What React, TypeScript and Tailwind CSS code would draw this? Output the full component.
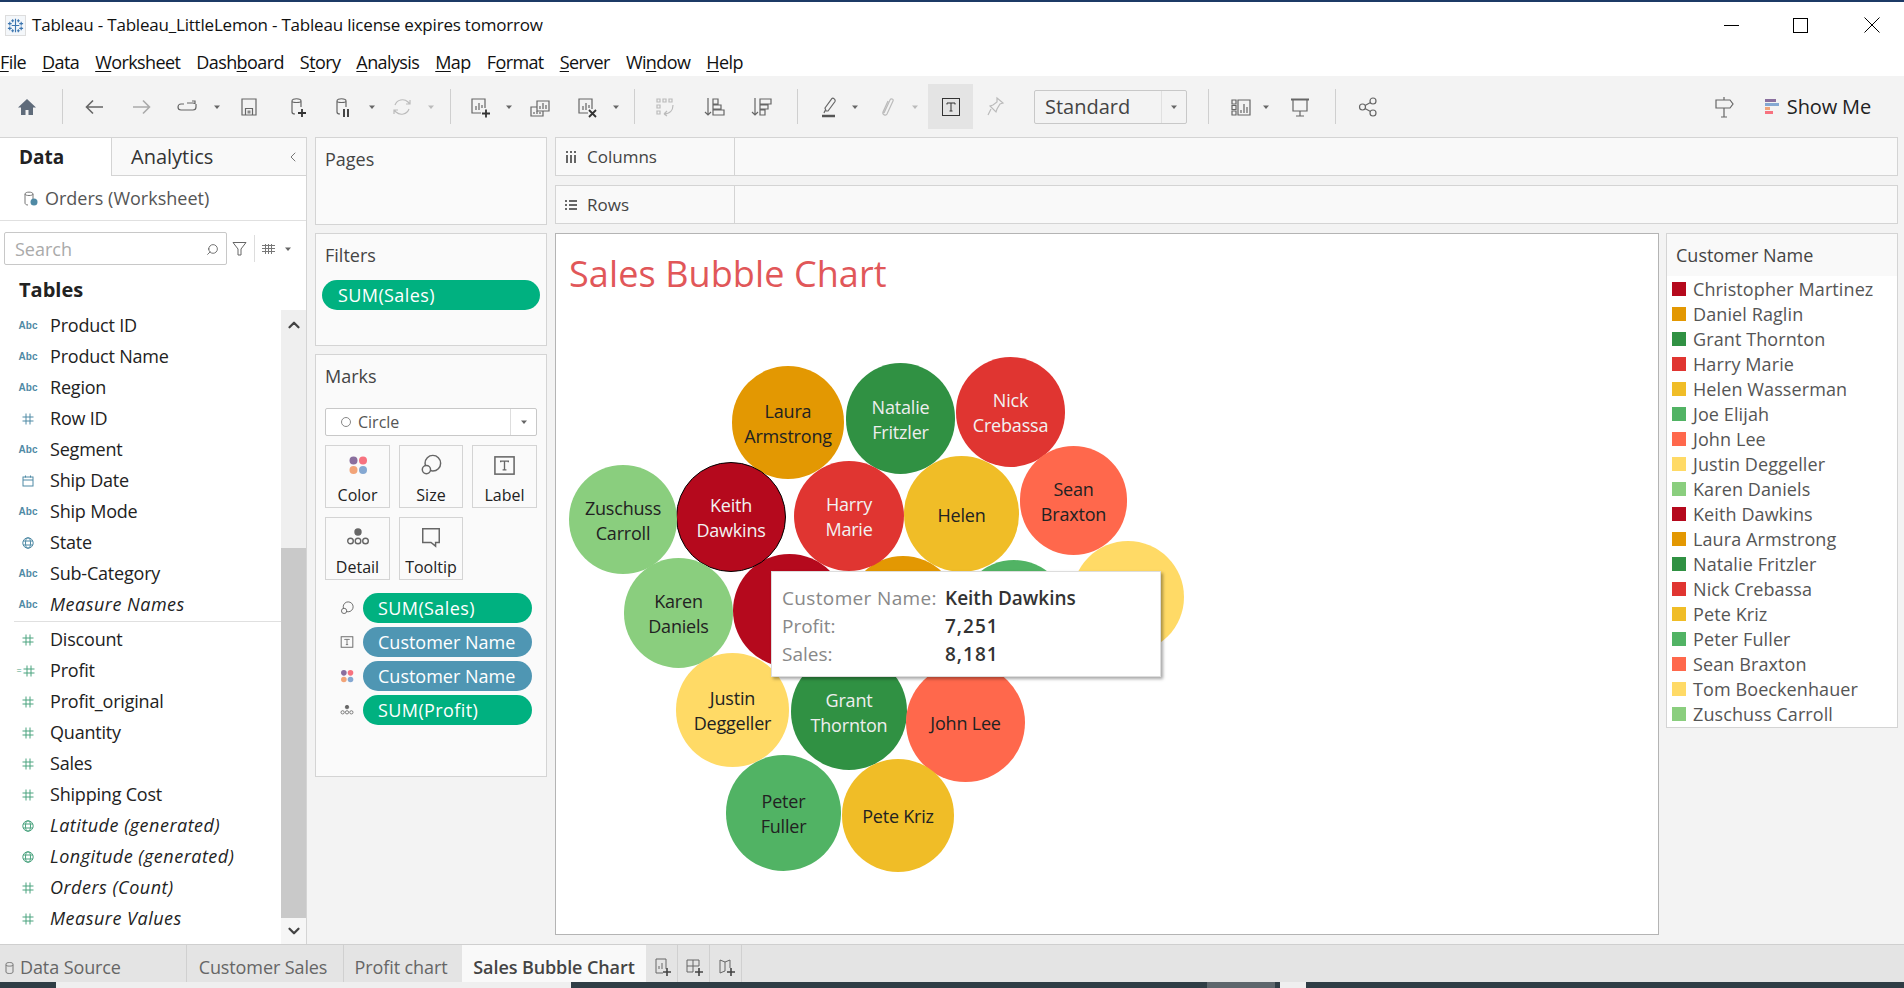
import { ReactNode } from "react";
import { ChevronDown, ChevronLeft, ChevronUp, Search } from "lucide-react";

const Ico = ({ children, cls = "ml-0" }: { children: ReactNode; cls?: string }) => (
  <svg className={`${cls} w-6 h-6 shrink-0`} viewBox="0 0 24 24" fill="none" stroke="#666" strokeWidth="1.2">
    {children}
  </svg>
);

const Caret = ({ cls, light }: { cls: string; light?: boolean }) => (
  <svg className={`${cls} w-2 h-2 shrink-0`} viewBox="0 0 8 8">
    <path d="M1 2.5h6L4 6z" fill={light ? "#bbb" : "#666"} />
  </svg>
);

const Sep = ({ cls }: { cls: string }) => <div className={`${cls} w-px h-[35px] bg-[#cfcfcf] shrink-0`} />;

const Cyl = () => <path d="M6 6c0-3 9-3 9 0v6M6 6c0 2 9 2 9 0M6 6v11c0 1 1 2 3 2" />;

const ColorDots = ({ size }: { size: string }) => (
  <svg className={size} viewBox="0 0 20 20">
    <circle cx="5.5" cy="5.5" r="4" fill="#8a6f9e" />
    <circle cx="15" cy="5.5" r="4" fill="#f7727f" />
    <circle cx="5.5" cy="15" r="4" fill="#f2a478" />
    <circle cx="15" cy="15" r="4" fill="#85a8d2" />
  </svg>
);
const SizeIcon = ({ size }: { size: string }) => (
  <svg className={size} viewBox="0 0 24 24" fill="none" stroke="#666" strokeWidth="1.6">
    <circle cx="14" cy="10" r="8.5" />
    <circle cx="7" cy="17" r="4.5" fill="#fafafa" />
  </svg>
);
const LabelIcon = ({ size }: { size: string }) => (
  <svg className={size} viewBox="0 0 24 24" fill="none" stroke="#666" strokeWidth="1.6">
    <rect x="2" y="3" width="20" height="18" />
    <path d="M8 8.5v-1h8v1M12 7.5v9M10 16.5h4" strokeWidth="1.4" />
  </svg>
);
const DetailIcon = ({ size }: { size: string }) => (
  <svg className={size} viewBox="0 0 24 24" fill="none" stroke="#666" strokeWidth="1.4">
    <circle cx="12" cy="7" r="3" fill="#666" />
    <circle cx="4.5" cy="16" r="2.8" />
    <circle cx="12" cy="16" r="2.8" />
    <circle cx="19.5" cy="16" r="2.8" />
  </svg>
);
const TooltipIcon = ({ size }: { size: string }) => (
  <svg className={size} viewBox="0 0 24 24" fill="none" stroke="#666" strokeWidth="1.6">
    <path d="M3 3h18v15h-4v4l-5-4H3z" />
  </svg>
);

const HashIcon = ({ color }: { color: string }) => (
  <svg className="w-3 h-3" viewBox="0 0 12 12" fill="none" stroke={color} strokeWidth="1">
    <path d="M4 .5v11M8 .5v11M.5 4h11M.5 8h11" />
  </svg>
);
const GlobeIcon = ({ color }: { color: string }) => (
  <svg className="w-3 h-3" viewBox="0 0 12 12" fill="none" stroke={color} strokeWidth="1">
    <circle cx="6" cy="6" r="5.2" />
    <ellipse cx="6" cy="6" rx="2.5" ry="5.2" />
    <path d="M1 4h10M1 8h10" />
  </svg>
);
const DateIcon = ({ color }: { color: string }) => (
  <svg className="w-3 h-3" viewBox="0 0 12 12" fill="none" stroke={color} strokeWidth="1">
    <rect x="1" y="2" width="10" height="9" />
    <path d="M1 5h10M3.5 .5v2M8.5 .5v2" />
  </svg>
);

const BLUE = "#4f8aa5";
const GREEN = "#4ba37f";

type Field = { name: string; kind: "abc" | "hash" | "calc" | "globe" | "date"; color: string; italic?: boolean };

const dimensions: Field[] = [
  { name: "Product ID", kind: "abc", color: BLUE },
  { name: "Product Name", kind: "abc", color: BLUE },
  { name: "Region", kind: "abc", color: BLUE },
  { name: "Row ID", kind: "hash", color: BLUE },
  { name: "Segment", kind: "abc", color: BLUE },
  { name: "Ship Date", kind: "date", color: BLUE },
  { name: "Ship Mode", kind: "abc", color: BLUE },
  { name: "State", kind: "globe", color: BLUE },
  { name: "Sub-Category", kind: "abc", color: BLUE },
  { name: "Measure Names", kind: "abc", color: BLUE, italic: true },
];

const measures: Field[] = [
  { name: "Discount", kind: "hash", color: GREEN },
  { name: "Profit", kind: "calc", color: GREEN },
  { name: "Profit_original", kind: "hash", color: GREEN },
  { name: "Quantity", kind: "hash", color: GREEN },
  { name: "Sales", kind: "hash", color: GREEN },
  { name: "Shipping Cost", kind: "hash", color: GREEN },
  { name: "Latitude (generated)", kind: "globe", color: GREEN, italic: true },
  { name: "Longitude (generated)", kind: "globe", color: GREEN, italic: true },
  { name: "Orders (Count)", kind: "hash", color: GREEN, italic: true },
  { name: "Measure Values", kind: "hash", color: GREEN, italic: true },
];

const FieldRow = ({ f }: { f: Field }) => (
  <div className="h-[31px] flex items-center">
    <div className="w-[50px] pl-[15px] pr-[9px] flex justify-center items-center gap-[1px] shrink-0">
      {f.kind === "abc" && <span className="text-[10px] font-semibold font-['Liberation_Sans',sans-serif]" style={{ color: f.color }}>Abc</span>}
      {f.kind === "hash" && <HashIcon color={f.color} />}
      {f.kind === "calc" && (
        <>
          <span className="text-[9px] leading-none text-[#4ba37f] -ml-[5px]">=</span>
          <HashIcon color={f.color} />
        </>
      )}
      {f.kind === "globe" && <GlobeIcon color={f.color} />}
      {f.kind === "date" && <DateIcon color={f.color} />}
    </div>
    <span className={`text-[18px] text-[#222] ${f.italic ? "italic tracking-[0.5px]" : "tracking-[-0.2px]"}`}>{f.name}</span>
  </div>
);

const menus: [string, string, string][] = [
  ["", "F", "ile"],
  ["", "D", "ata"],
  ["", "W", "orksheet"],
  ["Dash", "b", "oard"],
  ["S", "t", "ory"],
  ["", "A", "nalysis"],
  ["", "M", "ap"],
  ["F", "o", "rmat"],
  ["", "S", "erver"],
  ["Wi", "n", "dow"],
  ["", "H", "elp"],
];

const legend: [string, string][] = [
  ["Christopher Martinez", "bg-[#b5091d]"],
  ["Daniel Raglin", "bg-[#e39802]"],
  ["Grant Thornton", "bg-[#309143]"],
  ["Harry Marie", "bg-[#e03531]"],
  ["Helen Wasserman", "bg-[#f0bd27]"],
  ["Joe Elijah", "bg-[#51b364]"],
  ["John Lee", "bg-[#ff684c]"],
  ["Justin Deggeller", "bg-[#ffda66]"],
  ["Karen Daniels", "bg-[#8ace7e]"],
  ["Keith Dawkins", "bg-[#b5091d]"],
  ["Laura Armstrong", "bg-[#e39802]"],
  ["Natalie Fritzler", "bg-[#309143]"],
  ["Nick Crebassa", "bg-[#e03531]"],
  ["Pete Kriz", "bg-[#f0bd27]"],
  ["Peter Fuller", "bg-[#51b364]"],
  ["Sean Braxton", "bg-[#ff684c]"],
  ["Tom Boeckenhauer", "bg-[#ffda66]"],
  ["Zuschuss Carroll", "bg-[#8ace7e]"],
];

// place and colour of each mark on the chart canvas
const bubbles: { lines: string[]; cls: string }[] = [
  { lines: [], cls: "left-[177px] top-[320px] w-[113px] h-[113px] bg-[#b5091d]" },
  { lines: [], cls: "left-[291px] top-[322px] w-[112px] h-[112px] bg-[#e39802]" },
  { lines: [], cls: "left-[403px] top-[326px] w-[110px] h-[110px] bg-[#51b364]" },
  { lines: [], cls: "left-[516px] top-[307px] w-[112px] h-[112px] bg-[#ffda66]" },
  { lines: ["Laura", "Armstrong"], cls: "left-[176px] top-[132px] w-[112px] h-[113px] bg-[#e39802] text-[#222]" },
  { lines: ["Natalie", "Fritzler"], cls: "left-[290px] top-[129px] w-[109px] h-[111px] bg-[#309143] text-[#eee]" },
  { lines: ["Nick", "Crebassa"], cls: "left-[400px] top-[123px] w-[109px] h-[110px] bg-[#e03531] text-[#f2f2f2]" },
  { lines: ["Sean", "Braxton"], cls: "left-[464px] top-[212px] w-[107px] h-[109px] bg-[#ff684c] text-[#222]" },
  { lines: ["Harry", "Marie"], cls: "left-[238px] top-[227px] w-[110px] h-[110px] bg-[#e03531] text-[#f2f2f2]" },
  { lines: ["Helen"], cls: "left-[348px] top-[222px] w-[115px] h-[116px] bg-[#f0bd27] text-[#222]" },
  { lines: ["Keith", "Dawkins"], cls: "left-[120px] top-[228px] w-[110px] h-[110px] bg-[#b5091d] text-[#f2f2f2] border border-black" },
  { lines: ["Zuschuss", "Carroll"], cls: "left-[13px] top-[231px] w-[108px] h-[109px] bg-[#8ace7e] text-[#222]" },
  { lines: ["Karen", "Daniels"], cls: "left-[68px] top-[324px] w-[109px] h-[110px] bg-[#8ace7e] text-[#222]" },
  { lines: ["Justin", "Deggeller"], cls: "left-[120px] top-[419px] w-[113px] h-[114px] bg-[#ffda66] text-[#222]" },
  { lines: ["Grant", "Thornton"], cls: "left-[235px] top-[419px] w-[116px] h-[117px] bg-[#309143] text-[#eee]" },
  { lines: ["John Lee"], cls: "left-[350px] top-[429px] w-[119px] h-[119px] bg-[#ff684c] text-[#222]" },
  { lines: ["Peter", "Fuller"], cls: "left-[170px] top-[521px] w-[115px] h-[116px] bg-[#51b364] text-[#222]" },
  { lines: ["Pete Kriz"], cls: "left-[286px] top-[525px] w-[112px] h-[113px] bg-[#f0bd27] text-[#222]" },
];

const MarkBtn = ({ icon, label, cls }: { icon: ReactNode; label: string; cls: string }) => (
  <div className={`${cls} h-[63px] border border-[#d4d4d4] flex flex-col items-center pt-[7px] text-[16px] text-[#222]`}>
    <div className="h-[24px] flex items-center">{icon}</div>
    <span className="mt-[6px] leading-[24px]">{label}</span>
  </div>
);

const MarkPill = ({ icon, label, cls }: { icon: ReactNode; label: string; cls: string }) => (
  <div className="flex items-center h-[30px]">
    <div className="w-[47px] pl-[24px] shrink-0 flex">{icon}</div>
    <div className={`${cls} w-[169px] h-[30px] rounded-full pl-[15px] text-[18px] leading-[30px] text-white`}>{label}</div>
  </div>
);

const ShelfRow = ({ icon, label }: { icon: ReactNode; label: string }) => (
  <div className="h-[39px] border border-[#d4d4d4] bg-[#f9f9f9] flex items-center">
    <div className="w-[179px] h-full border-r border-[#d4d4d4] flex items-center pl-[9px]">
      {icon}
      <span className="ml-[10px] text-[17px] text-[#444]">{label}</span>
    </div>
  </div>
);

export default function App() {
  return (
    <div className="w-[1904px] h-[988px] flex flex-col overflow-hidden bg-white font-['Open_Sans',sans-serif] text-[#222]">
      <div className="h-[2px] bg-[#1c3a66]" />

      {/* title bar */}
      <div className="h-[46px] flex items-center">
        <svg className="ml-[5px] w-[21px] h-[21px] border border-[#ddd] bg-[#f4f7fa]" viewBox="0 0 20 20" stroke="#3d76b0" strokeWidth="1.2">
          <path d="M10 3v14M6 10h8M4 6v4M2 8h4M16 6v4M14 8h4M4 11v4M2 13h4M16 11v4M14 13h4M7 3.5v3M5.5 5h3M13 3.5v3M11.5 5h3M7 14v3M5.5 15.500h3M13 14v3M11.500 15.500h3" />
        </svg>
        <span className="ml-[6px] text-[17px] tracking-[-0.2px] text-[#111]">Tableau - Tableau_LittleLemon - Tableau license expires tomorrow</span>
        <div className="ml-auto flex items-center">
          <div className="w-[15px] h-px bg-black mr-[54px]" />
          <div className="w-[15px] h-[15px] border border-black mr-[56px]" />
          <svg className="w-[16px] h-[16px] mr-[24px]" viewBox="0 0 16 16" stroke="black">
            <path d="M.5.5l15 15M15.500.5l-15 15" />
          </svg>
        </div>
      </div>

      {/* menu */}
      <div className="h-[28px] flex items-center gap-[16px] text-[18px] tracking-[-0.6px] text-[#111]">
        {menus.map(([pre, key, post]) => (
          <span key={pre + key + post}>
            {pre}
            <span className="underline underline-offset-2">{key}</span>
            {post}
          </span>
        ))}
      </div>

      {/* toolbar */}
      <div className="h-[61px] bg-[#f3f3f3] flex items-center">
        <Ico cls="ml-[15px]"><path d="M12 4L3 12.500h3V20h4.500v-5h3v5H18v-7.500h3z" fill="#5f6b7a" stroke="none" /></Ico>
        <Sep cls="ml-[23px]" />
        <Ico cls="ml-[19px]"><path d="M21 12H5M11 5.500L4.500 12l6.500 6.500" strokeWidth="1.6" /></Ico>
        <Ico cls="ml-[24px]"><path d="M3 12h16M13 5.500l6.500 6.500-6.500 6.500" stroke="#aaa" strokeWidth="1.6" /></Ico>
        <Ico cls="ml-[21px]"><path d="M9 9H6a3 3 0 0 0 0 6h12a3 3 0 0 0 3-3V9M21 9l0 1M17 6h3v3M20 9c0-1-1-1-2-1h-6" /></Ico>
        <Caret cls="ml-[14px]" />
        <Ico cls="ml-[16px]"><path d="M5 4h14v16H5z" /><path d="M8.500 20v-6.500h7V20" /><rect x="10.500" y="15.500" width="3" height="3" fill="#888" stroke="none" /></Ico>
        <Ico cls="ml-[25px]"><Cyl /><path d="M12 18h8M16 14v8" stroke="#333" strokeWidth="1.8" /></Ico>
        <Ico cls="ml-[21px]"><Cyl /><path d="M13 14v8M17 14v8" stroke="#333" strokeWidth="1.8" /></Ico>
        <Caret cls="ml-[13px]" />
        <Ico cls="ml-[14px]"><path d="M5 10a8 8 0 0 1 13-3l2 2M19 14a8 8 0 0 1-13 3l-2-2M20 5v4h-4M4 19v-4h4" stroke="#bbb" /></Ico>
        <Caret cls="ml-[13px]" light />
        <Sep cls="ml-[15px]" />
        <Ico cls="ml-[17px]"><path d="M17 13V4H4v14h9" /><path d="M8 15v-4M11 15V8M14 13v-3" /><path d="M14 18.500h8M18 14.500v8" stroke="#333" strokeWidth="1.8" /></Ico>
        <Caret cls="ml-[13px]" />
        <Ico cls="ml-[15px]"><path d="M9 6h12v10H9z" /><path d="M12 14v-3M15 14V8M18 14v-4" /><path d="M9 12H3v9h12v-5M6 19v-2M9 19v-3M12 19v-2" /></Ico>
        <Ico cls="ml-[23px]"><path d="M17 14V4H4v14h9" /><path d="M8 15v-4M11 15V8M14 13v-3" /><path d="M14 15l7 7M21 15l-7 7" stroke="#333" strokeWidth="1.8" /></Ico>
        <Caret cls="ml-[13px]" />
        <Sep cls="ml-[14px]" />
        <Ico cls="ml-[18px]"><g stroke="#bbb"><path d="M4 4h3v3H4zM10 4h3v3h-3zM16 4h3v3h-3zM4 10h3v3H4zM4 16h3v3H4z" /><path d="M20 10c0 5-3 9-9 9M11 19l3-3M11 19l3 2" /></g></Ico>
        <Ico cls="ml-[26px]"><path d="M5 3v17M2 17l3 3 3-3" /><path d="M10 4h5v5h-5zM10 10h8v4h-8zM10 15h11v5H10z" /></Ico>
        <Ico cls="ml-[23px]"><path d="M5 3v17M2 17l3 3 3-3" /><path d="M10 4h11v5H10zM10 10h8v4h-8zM10 15h5v5h-5z" /></Ico>
        <Sep cls="ml-[23px]" />
        <Ico cls="ml-[19px]"><path d="M9 16l-1-3L15 3.500c1-1 4 1 3 3L11 16zM8 15.500L7 18" /><path d="M5 21h13" stroke="#555" strokeWidth="2.500" /></Ico>
        <Caret cls="ml-[10px]" />
        <Ico cls="ml-[16px]"><path d="M9 18L15 5c1-2 4-1 3 1l-6 13c-1 2-5 1-4-2l5-11" stroke="#bbb" /></Ico>
        <Caret cls="ml-[12px]" light />
        <div className="ml-[9px] w-[45px] h-[45px] bg-[#e4e4e4] flex items-center justify-center">
          <svg className="w-[18px] h-[18px]" viewBox="0 0 18 18" fill="none" stroke="#333">
            <rect x=".5" y=".5" width="17" height="17" />
            <path d="M5 6.500V5h8v1.500M9 5v8M7.500 13h3" />
          </svg>
        </div>
        <Ico cls="ml-[10px]"><path d="M14 3l6 5-3 1-3 5-1 3-6-6 3-1 4-3zM8 14l-3 6" stroke="#bbb" /></Ico>
        <div className="ml-[27px] w-[153px] h-[34px] border border-[#c8c8c8] rounded-[2px] flex items-center">
          <span className="w-[126px] pl-[10px] text-[20px] text-[#444] leading-[32px]">Standard</span>
          <div className="flex-1 h-full border-l border-[#e0e0e0] flex items-center justify-center">
            <Caret cls="ml-0" />
          </div>
        </div>
        <Sep cls="ml-[21px]" />
        <Ico cls="ml-[20px]"><path d="M3 5h4v4H3zM3 10.500h4v4H3zM3 16h4v4H3zM9 5h12v15H9z" /><path d="M12 18v-3M15 18V9M18 18v-6" /></Ico>
        <Caret cls="ml-[9px]" />
        <Ico cls="ml-[18px]"><path d="M3 4.500h18" strokeWidth="2" /><path d="M5 5v11h14V5M12 16v5M8 21h8" /></Ico>
        <Sep cls="ml-[23px]" />
        <Ico cls="ml-[20px]"><circle cx="6.500" cy="12" r="3" /><circle cx="17" cy="6" r="3" /><circle cx="17" cy="18" r="3" /><path d="M9 10.500l5.500-3M9 13.500l5.500 3" /></Ico>
        <Ico cls="ml-auto"><path d="M12 2v3M4 5h14l3 4-3 4H4zM12 13v9M9 22h6" /></Ico>
        <div className="ml-[29px] mr-[33px] flex items-center">
          <div className="w-[14px] flex flex-col gap-[1px]">
            <div className="h-[3px] w-[11px] bg-[#8a6f9e]" />
            <div className="h-[3px] w-[14px] bg-[#85a8d2]" />
            <div className="h-[3px] w-[5px] bg-[#f2a478]" />
            <div className="h-[3px] w-[8px] bg-[#f7727f]" />
          </div>
          <span className="ml-[8px] text-[20px] tracking-[-0.15px] text-[#222]">Show Me</span>
        </div>
      </div>

      {/* main area */}
      <div className="flex-1 min-h-0 bg-[#f3f3f3] flex">
        {/* data pane */}
        <div className="w-[307px] shrink-0 bg-white border-t border-r border-[#d4d4d4] flex flex-col">
          <div className="h-[38px] flex shrink-0">
            <div className="w-[111px] pl-[19px] text-[19px] font-bold leading-[38px] text-[#222]">Data</div>
            <div className="flex-1 bg-[#f9f9f9] border-l border-b border-[#d4d4d4] pl-[19px] text-[20px] leading-[37px] flex items-center text-[#333]">
              Analytics
              <ChevronLeft className="ml-auto mr-[5px] w-4 h-4 text-[#777]" strokeWidth={1.5} />
            </div>
          </div>
          <div className="h-[45px] shrink-0 border-b border-[#e0e0e0] flex items-center pl-[23px] text-[#555] text-[18px]">
            <svg className="w-[15px] h-[15px]" viewBox="0 0 15 15" fill="none" stroke="#777">
              <path d="M2 3c0-2.500 8-2.500 8 0v5M2 3c0 2 8 2 8 0M2 3v9c0 1 1 2 3 2" />
              <circle cx="11" cy="11" r="3.500" fill="#4f8aa5" stroke="none" />
            </svg>
            <span className="ml-[7px]">Orders (Worksheet)</span>
          </div>
          <div className="mt-[11px] ml-[4px] flex items-center shrink-0">
            <div className="w-[223px] h-[33px] border border-[#c8c8c8] rounded-[2px] flex items-center pl-[10px] pt-[1px] text-[18px] text-[#aaa]">
              Search
              <Search className="ml-auto mr-[7px] w-[13px] h-[13px] text-[#555] -scale-x-100" strokeWidth={1.5} />
            </div>
            <svg className="ml-[5px] w-[15px] h-[15px]" viewBox="0 0 15 15" fill="none" stroke="#666">
              <path d="M1 1.500h13L9 8v6H6V8z" />
            </svg>
            <div className="ml-[7px] w-px h-[27px] bg-[#ddd]" />
            <svg className="ml-[7px] w-[13px] h-[10px]" viewBox="0 0 13 10" stroke="#777">
              <path d="M0 1.500h13M0 4.500h13M0 7.500h13M3.500 0v10M6.500 0v10M9.500 0v10" />
            </svg>
            <Caret cls="ml-[9px]" />
          </div>
          <div className="h-[45px] shrink-0 pl-[19px] pt-[5px] flex items-center text-[20px] font-bold text-[#222]">Tables</div>
          <div className="flex-1 min-h-0 flex">
            <div className="flex-1">
              {dimensions.map((f) => <FieldRow key={f.name} f={f} />)}
              <div className="ml-[14px] mt-[1px] mb-[2px] h-px bg-[#e0e0e0]" />
              {measures.map((f) => <FieldRow key={f.name} f={f} />)}
            </div>
            <div className="w-[25px] flex flex-col bg-[#efefef]">
              <div className="h-[238px] pt-[6px] flex justify-center">
                <ChevronUp className="w-[18px] h-[18px] text-[#444]" strokeWidth={3} />
              </div>
              <div className="h-[370px] bg-[#c9c9c9]" />
              <div className="flex-1 bg-[#f6f6f6] flex items-center justify-center">
                <ChevronDown className="w-[18px] h-[18px] text-[#444]" strokeWidth={3} />
              </div>
            </div>
          </div>
        </div>

        {/* cards */}
        <div className="ml-[8px] w-[232px] shrink-0 flex flex-col gap-[8px] text-[18px] text-[#444]">
          <div className="h-[88px] border border-[#d4d4d4] bg-[#fafafa] pl-[9px] pt-[8px]">Pages</div>
          <div className="h-[113px] border border-[#d4d4d4] bg-[#fafafa] pt-[8px]">
            <div className="pl-[9px]">Filters</div>
            <div className="mt-[11px] ml-[6px] w-[218px] h-[30px] rounded-full bg-[#00b180] pl-[16px] tracking-[0.4px] leading-[30px] text-white">SUM(Sales)</div>
          </div>
          <div className="h-[423px] border border-[#d4d4d4] bg-[#fafafa] pt-[8px]">
            <div className="pl-[9px]">Marks</div>
            <div className="mt-[18px] ml-[9px] w-[212px] h-[28px] border border-[#c8c8c8] rounded-[2px] bg-white flex items-center">
              <div className="ml-[15px] w-[10px] h-[10px] rounded-full border border-[#888]" />
              <span className="ml-[7px] -mt-[1px] text-[16px] text-[#555]">Circle</span>
              <div className="ml-auto w-[26px] h-full border-l border-[#ddd] flex items-center justify-center">
                <Caret cls="ml-0" />
              </div>
            </div>
            <div className="mt-[9px] ml-[9px] flex">
              <MarkBtn cls="w-[65px]" icon={<ColorDots size="w-[20px] h-[20px]" />} label="Color" />
              <MarkBtn cls="ml-[9px] w-[64px]" icon={<SizeIcon size="w-[22px] h-[22px]" />} label="Size" />
              <MarkBtn cls="ml-[9px] w-[65px]" icon={<LabelIcon size="w-[23px] h-[23px]" />} label="Label" />
            </div>
            <div className="mt-[9px] ml-[9px] flex">
              <MarkBtn cls="w-[65px]" icon={<DetailIcon size="w-[24px] h-[24px]" />} label="Detail" />
              <MarkBtn cls="ml-[9px] w-[64px]" icon={<TooltipIcon size="w-[22px] h-[22px]" />} label="Tooltip" />
            </div>
            <div className="mt-[13px] flex flex-col gap-[4px]">
              <MarkPill cls="bg-[#00b180] tracking-[0.4px]" icon={<SizeIcon size="w-[14px] h-[14px]" />} label="SUM(Sales)" />
              <MarkPill cls="bg-[#4f96b3]" icon={<LabelIcon size="w-[14px] h-[14px]" />} label="Customer Name" />
              <MarkPill cls="bg-[#4f96b3]" icon={<ColorDots size="w-[14px] h-[14px]" />} label="Customer Name" />
              <MarkPill cls="bg-[#00b180] tracking-[0.4px]" icon={<DetailIcon size="w-[14px] h-[14px]" />} label="SUM(Profit)" />
            </div>
          </div>
        </div>

        {/* shelves and view */}
        <div className="ml-[8px] w-[1343px] shrink-0 flex flex-col gap-[9px]">
          <ShelfRow
            label="Columns"
            icon={
              <svg className="w-[12px] h-[12px]" viewBox="0 0 12 12" fill="#666">
                <path d="M1 0h2v2H1zM5 0h2v2H5zM9 0h2v2H9zM1 4h2v8H1zM5 4h2v8H5zM9 4h2v8H9z" />
              </svg>
            }
          />
          <ShelfRow
            label="Rows"
            icon={
              <svg className="w-[12px] h-[12px]" viewBox="0 0 12 12" fill="#666">
                <path d="M0 1h2v2H0zM0 5h2v2H0zM0 9h2v2H0zM4 1h8v2H4zM4 5h8v2H4zM4 9h8v2H4z" />
              </svg>
            }
          />
          <div className="flex items-start">
            <div className="relative w-[1104px] h-[702px] bg-white border border-[#b4b4b4]">
              <div className="ml-[13px] mt-[18px] text-[36px] tracking-[0.1px] leading-[44px] text-[#e15759]">Sales Bubble Chart</div>
              {bubbles.map((b, i) => (
                <div key={i} className={`absolute rounded-full flex flex-col items-center justify-center pt-[2px] text-[18px] leading-[25px] tracking-[-0.2px] ${b.cls}`}>
                  {b.lines.map((l) => <span key={l}>{l}</span>)}
                </div>
              ))}
              <div className="absolute left-[215px] top-[337px] w-[390px] h-[106px] bg-white border border-[#ddd] shadow-[2px_2px_3px_rgba(0,0,0,0.35)] pl-[10px] pt-[12px] text-[19px] leading-[28px]">
                <div className="flex"><span className="w-[163px] text-[#888] tracking-[0.35px]">Customer Name:</span><span className="font-semibold text-[#333]">Keith Dawkins</span></div>
                <div className="flex"><span className="w-[163px] text-[#888]">Profit:</span><span className="font-semibold text-[#333] tracking-[1px]">7,251</span></div>
                <div className="flex"><span className="w-[163px] text-[#888]">Sales:</span><span className="font-semibold text-[#333] tracking-[1px]">8,181</span></div>
              </div>
            </div>
            <div className="ml-[7px] w-[232px] h-[495px] bg-white border border-[#d4d4d4]">
              <div className="h-[42px] bg-[#f9f9f9] pl-[9px] flex items-center text-[18px] text-[#444]">Customer Name</div>
              <div className="pt-[1px]">
                {legend.map(([name, color]) => (
                  <div key={name} className="h-[25px] flex items-center pl-[5px]">
                    <div className={`w-[14px] h-[14px] -mt-[2px] ${color}`} />
                    <span className="ml-[7px] text-[18px] tracking-[0.1px] text-[#555]">{name}</span>
                  </div>
                ))}
              </div>
            </div>
          </div>
        </div>
      </div>

      {/* sheet tabs */}
      <div className="h-[38px] bg-[#e4e4e4] border-t border-[#cfcfcf] flex text-[18px] tracking-[-0.1px] text-[#666]">
        <div className="w-[187px] border-r border-[#d0d0d0] flex items-center pl-[5px] pt-[8px]">
          <svg className="w-[9px] h-[12px]" viewBox="0 0 9 12" fill="none" stroke="#777"><path d="M1 2c0-2 7-2 7 0v8c0 2-7 2-7 0zM1 3c0 1.500 7 1.500 7 0" /></svg>
          <span className="ml-[6px]">Data Source</span>
        </div>
        <div className="w-[157px] border-r border-[#d0d0d0] flex items-center justify-center pt-[8px] pr-[4px]">Customer Sales</div>
        <div className="w-[118px] flex items-center justify-center pt-[8px] pr-[4px]">Profit chart</div>
        <div className="w-[184px] bg-[#f9f9f9] flex items-center justify-center pt-[8px] font-semibold text-[#444]">Sales Bubble Chart</div>
        {[
          "M4 2h10v10M4 2v14h7M7 12V9M10 12V6",
          "M3 3h12v6M3 3v12h6M9 3v12M3 9h12",
          "M4 3l5 2 5-2v8M4 3v13l5-2M9 5v9",
        ].map((d) => (
          <div key={d} className="w-[32px] border-r border-[#d0d0d0] flex items-center justify-center pt-[6px]">
            <svg className="w-[20px] h-[20px]" viewBox="0 0 20 20" fill="none" stroke="#666">
              <path d={d} />
              <path d="M11 15h8M15 11v8" stroke="#444" strokeWidth="1.6" />
            </svg>
          </div>
        ))}
      </div>

      {/* what shows of the desktop underneath */}
      <div className="h-[6px] bg-[#2f3d45] flex shrink-0">
        <div className="ml-[56px] w-[515px] bg-[#efefef]" />
        <div className="ml-[636px] w-[68px] bg-[#5d666c]" />
        <div className="ml-[5px] w-[26px] bg-[#efefef]" />
      </div>
    </div>
  );
}
